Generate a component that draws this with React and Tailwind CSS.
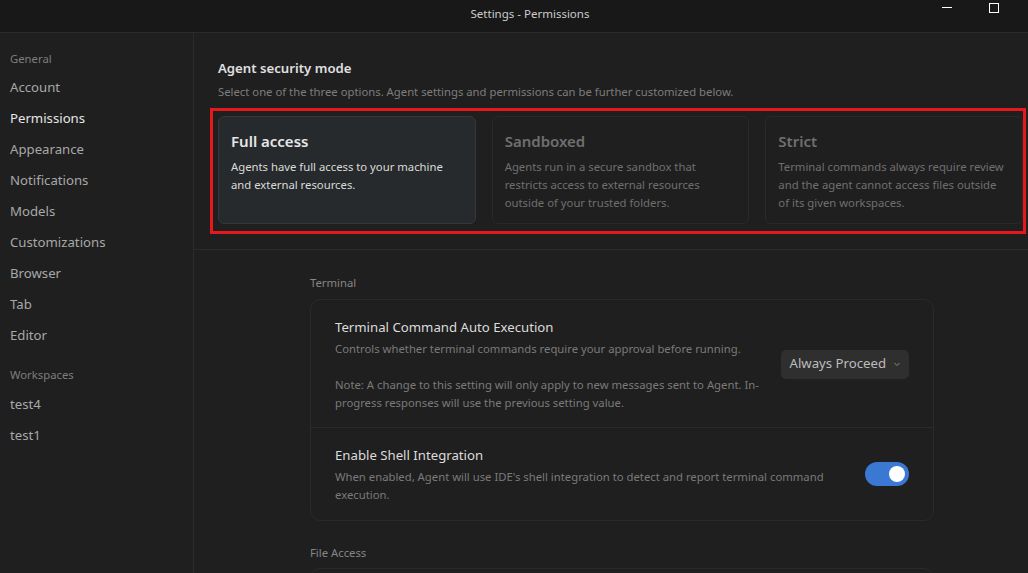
import React from 'react';

export default function App() {
  const nav = ['Account', 'Permissions', 'Appearance', 'Notifications', 'Models', 'Customizations', 'Browser', 'Tab', 'Editor'];
  const workspaces = ['test4', 'test1'];

  const modes = [
    {
      title: 'Full access',
      description: 'Agents have full access to your machine and external resources.',
      active: true,
    },
    {
      title: 'Sandboxed',
      description: 'Agents run in a secure sandbox that restricts access to external resources outside of your trusted folders.',
    },
    {
      title: 'Strict',
      description: 'Terminal commands always require review and the agent cannot access files outside of its given workspaces.',
    },
  ];

  return (
    <div
      className="w-[1028px] h-[573px] overflow-hidden flex flex-col bg-[#1f1f1f] text-[#cccccc]"
      style={{ fontFamily: '"Noto Sans", "Open Sans", sans-serif' }}
    >
      {/* title bar */}
      <div className="relative h-[33px] shrink-0 flex items-center justify-center bg-[#181818] border-b border-[#2b2b2b]">
        <span className="pl-[32px] text-[11.5px] text-[#cccccc] -mt-[5px]">Settings - Permissions</span>
        <div className="absolute right-[29px] top-[3px] flex items-start gap-[37px]">
          <div className="mt-[4px] w-[10px] h-px bg-white" />
          <div className="w-[10px] h-[10px] border border-white" />
        </div>
      </div>

      <div className="flex flex-1 min-h-0">
        {/* sidebar */}
        <div className="w-[194px] shrink-0 border-r border-[#2b2b2b] pt-[15px] pl-[10px]">
          <div className="text-[11.3px] text-[#7d7d7d] h-[22px] leading-[22px]">General</div>
          <div className="mt-[2px] flex flex-col">
            {nav.map((n) => (
              <div
                key={n}
                className={`h-[31px] leading-[31px] text-[13.2px] ${n === 'Permissions' ? 'text-[#e6e6e6]' : 'text-[#a8a8a8]'}`}
              >
                {n}
              </div>
            ))}
          </div>
          <div className="mt-[13px] text-[11.3px] text-[#7d7d7d] h-[22px] leading-[22px]">Workspaces</div>
          <div className="mt-[3px] flex flex-col">
            {workspaces.map((n) => (
              <div key={n} className="h-[31px] leading-[31px] text-[13.2px] text-[#a8a8a8]">
                {n}
              </div>
            ))}
          </div>
        </div>

        {/* main */}
        <div className="flex-1 min-w-0 flex flex-col">
          <div className="pl-[16px] pr-[2px] pt-[25px] pb-[15px] border-b border-[#2b2b2b]">
            <div className="pl-[8px]">
              <div className="text-[13.2px] font-semibold text-[#e0e0e0] leading-[20px]">Agent security mode</div>
              <div className="mt-[5px] text-[11.3px] text-[#7d7d7d] leading-[18px]">
                Select one of the three options. Agent settings and permissions can be further customized below.
              </div>
            </div>
            <div className="mt-[7px] border-[3px] border-[#e5191c] pt-[5px] pl-[5px] pb-[7px]">
              <div className="grid grid-cols-3 gap-4">
                {modes.map((m) => (
                  <div
                    key={m.title}
                    className={`h-[108px] rounded-[6px] border px-[12px] pt-[13px] ${
                      m.active ? 'bg-[#272a2c] border-[#353739]' : 'bg-[#1f1f1f] border-[#2a2a2a]'
                    }`}
                  >
                    <div className={`text-[15px] font-semibold leading-[22px] ${m.active ? 'text-[#e6e6e6]' : 'text-[#6f6f6f]'}`}>
                      {m.title}
                    </div>
                    <div className={`mt-[6px] text-[11.3px] leading-[18px] ${m.active ? 'text-[#dadada]' : 'text-[#6f6f6f]'}`}>
                      {m.description}
                    </div>
                  </div>
                ))}
              </div>
            </div>
          </div>

          <div className="pl-[116px] pt-[24px]">
            <div className="w-[624px]">
              <div className="text-[11.3px] text-[#858585] leading-[18px]">Terminal</div>
              <div className="mt-[7px] rounded-[10px] border border-[#2a2a2a]">
                <div className="flex items-center px-[24px] pt-[16px] pb-[15px] border-b border-[#2a2a2a]">
                  <div className="flex-1">
                    <div className="text-[13.2px] text-[#dcdcdc] leading-[22px]">Terminal Command Auto Execution</div>
                    <div className="mt-[2px] text-[11.3px] text-[#7a7a7a] leading-[18px]">
                      Controls whether terminal commands require your approval before running.
                    </div>
                    <div className="mt-[18px] text-[11.3px] text-[#7a7a7a] leading-[18px] w-[440px]">
                      Note: A change to this setting will only apply to new messages sent to Agent. In-progress responses will use the previous setting value.
                    </div>
                  </div>
                  <div className="shrink-0 flex items-center gap-[7px] h-[29px] px-[8px] rounded-[5px] bg-[#2f2f2f] text-[13.2px] text-[#bdbdbd]">
                    <span>Always Proceed</span>
                    <svg width="8" height="8" viewBox="0 0 8 8" fill="none">
                      <path d="M1.5 3l2.5 2.5L6.5 3" stroke="#8a8a8a" strokeWidth="1" />
                    </svg>
                  </div>
                </div>
                <div className="flex items-center px-[24px] pt-[16px] pb-[16px]">
                  <div className="flex-1 pr-[20px]">
                    <div className="text-[13.2px] text-[#dcdcdc] leading-[22px]">Enable Shell Integration</div>
                    <div className="mt-[2px] text-[11.3px] text-[#7a7a7a] leading-[18px] w-[500px]">
                      When enabled, Agent will use IDE's shell integration to detect and report terminal command execution.
                    </div>
                  </div>
                  <div className="shrink-0 w-[44px] h-[24px] rounded-full bg-[#3a78d4] flex items-center justify-end pr-[4px]">
                    <div className="w-[16px] h-[16px] rounded-full bg-white" />
                  </div>
                </div>
              </div>
              <div className="mt-[23px] text-[11.3px] text-[#858585] leading-[18px]">File Access</div>
              <div className="mt-[6px] h-[20px] rounded-t-[10px] border border-[#2a2a2a]" />
            </div>
          </div>
        </div>
      </div>
    </div>
  );
}
